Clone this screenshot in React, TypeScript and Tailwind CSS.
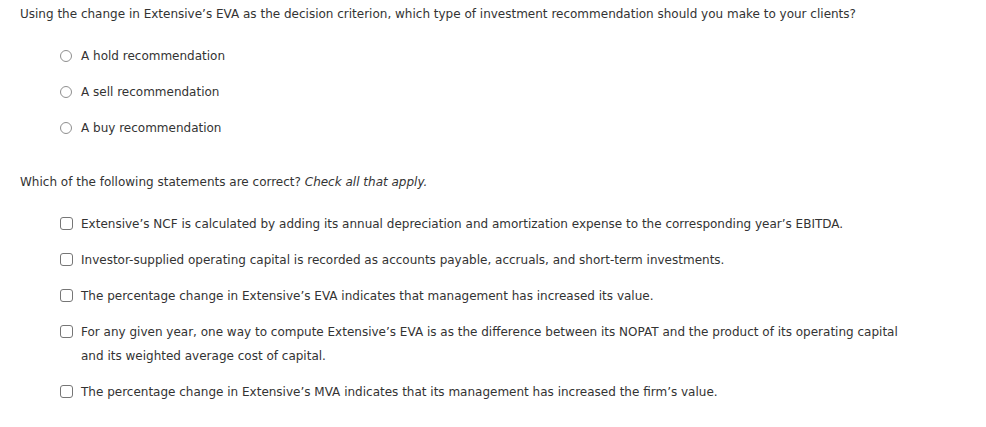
import React from 'react';

const radios = ['A hold recommendation', 'A sell recommendation', 'A buy recommendation'];

const checks = [
  'Extensive’s NCF is calculated by adding its annual depreciation and amortization expense to the corresponding year’s EBITDA.',
  'Investor-supplied operating capital is recorded as accounts payable, accruals, and short-term investments.',
  'The percentage change in Extensive’s EVA indicates that management has increased its value.',
  'For any given year, one way to compute Extensive’s EVA is as the difference between its NOPAT and the product of its operating capital and its weighted average cost of capital.',
  'The percentage change in Extensive’s MVA indicates that its management has increased the firm’s value.',
];

function Radio() {
  return <span className="mt-[2px] h-[12px] w-[12px] shrink-0 rounded-full border border-[#8f8f8f] bg-white" />;
}

function Checkbox() {
  return <span className="mt-[1px] h-[13px] w-[13px] shrink-0 rounded-[3px] border border-[#767676] bg-white" />;
}

export default function App() {
  return (
    <div className="min-h-[427px] w-[986px] bg-white pl-[20px] pt-[6px] text-[12px] leading-[16px] text-[#333]" style={{ fontFamily: '"DejaVu Sans", Verdana, sans-serif' }}>
      <p>Using the change in Extensive’s EVA as the decision criterion, which type of investment recommendation should you make to your clients?</p>

      {/* radio options */}
      <div className="mt-[26px] flex flex-col gap-[20px] pl-[40px]">
        {radios.map((r) => (
          <label key={r} className="flex items-start gap-[9px]">
            <Radio />
            <span>{r}</span>
          </label>
        ))}
      </div>

      <p className="mt-[38px]">
        Which of the following statements are correct? <em>Check all that apply.</em>
      </p>

      {/* checkbox options */}
      <div className="mt-[26px] flex flex-col gap-[16px] pl-[40px]">
        {checks.map((c) => (
          <label key={c} className="flex items-start gap-[8px]">
            <Checkbox />
            <span className="max-w-[830px] leading-[24px] -mt-[4px]">{c}</span>
          </label>
        ))}
      </div>
    </div>
  );
}
